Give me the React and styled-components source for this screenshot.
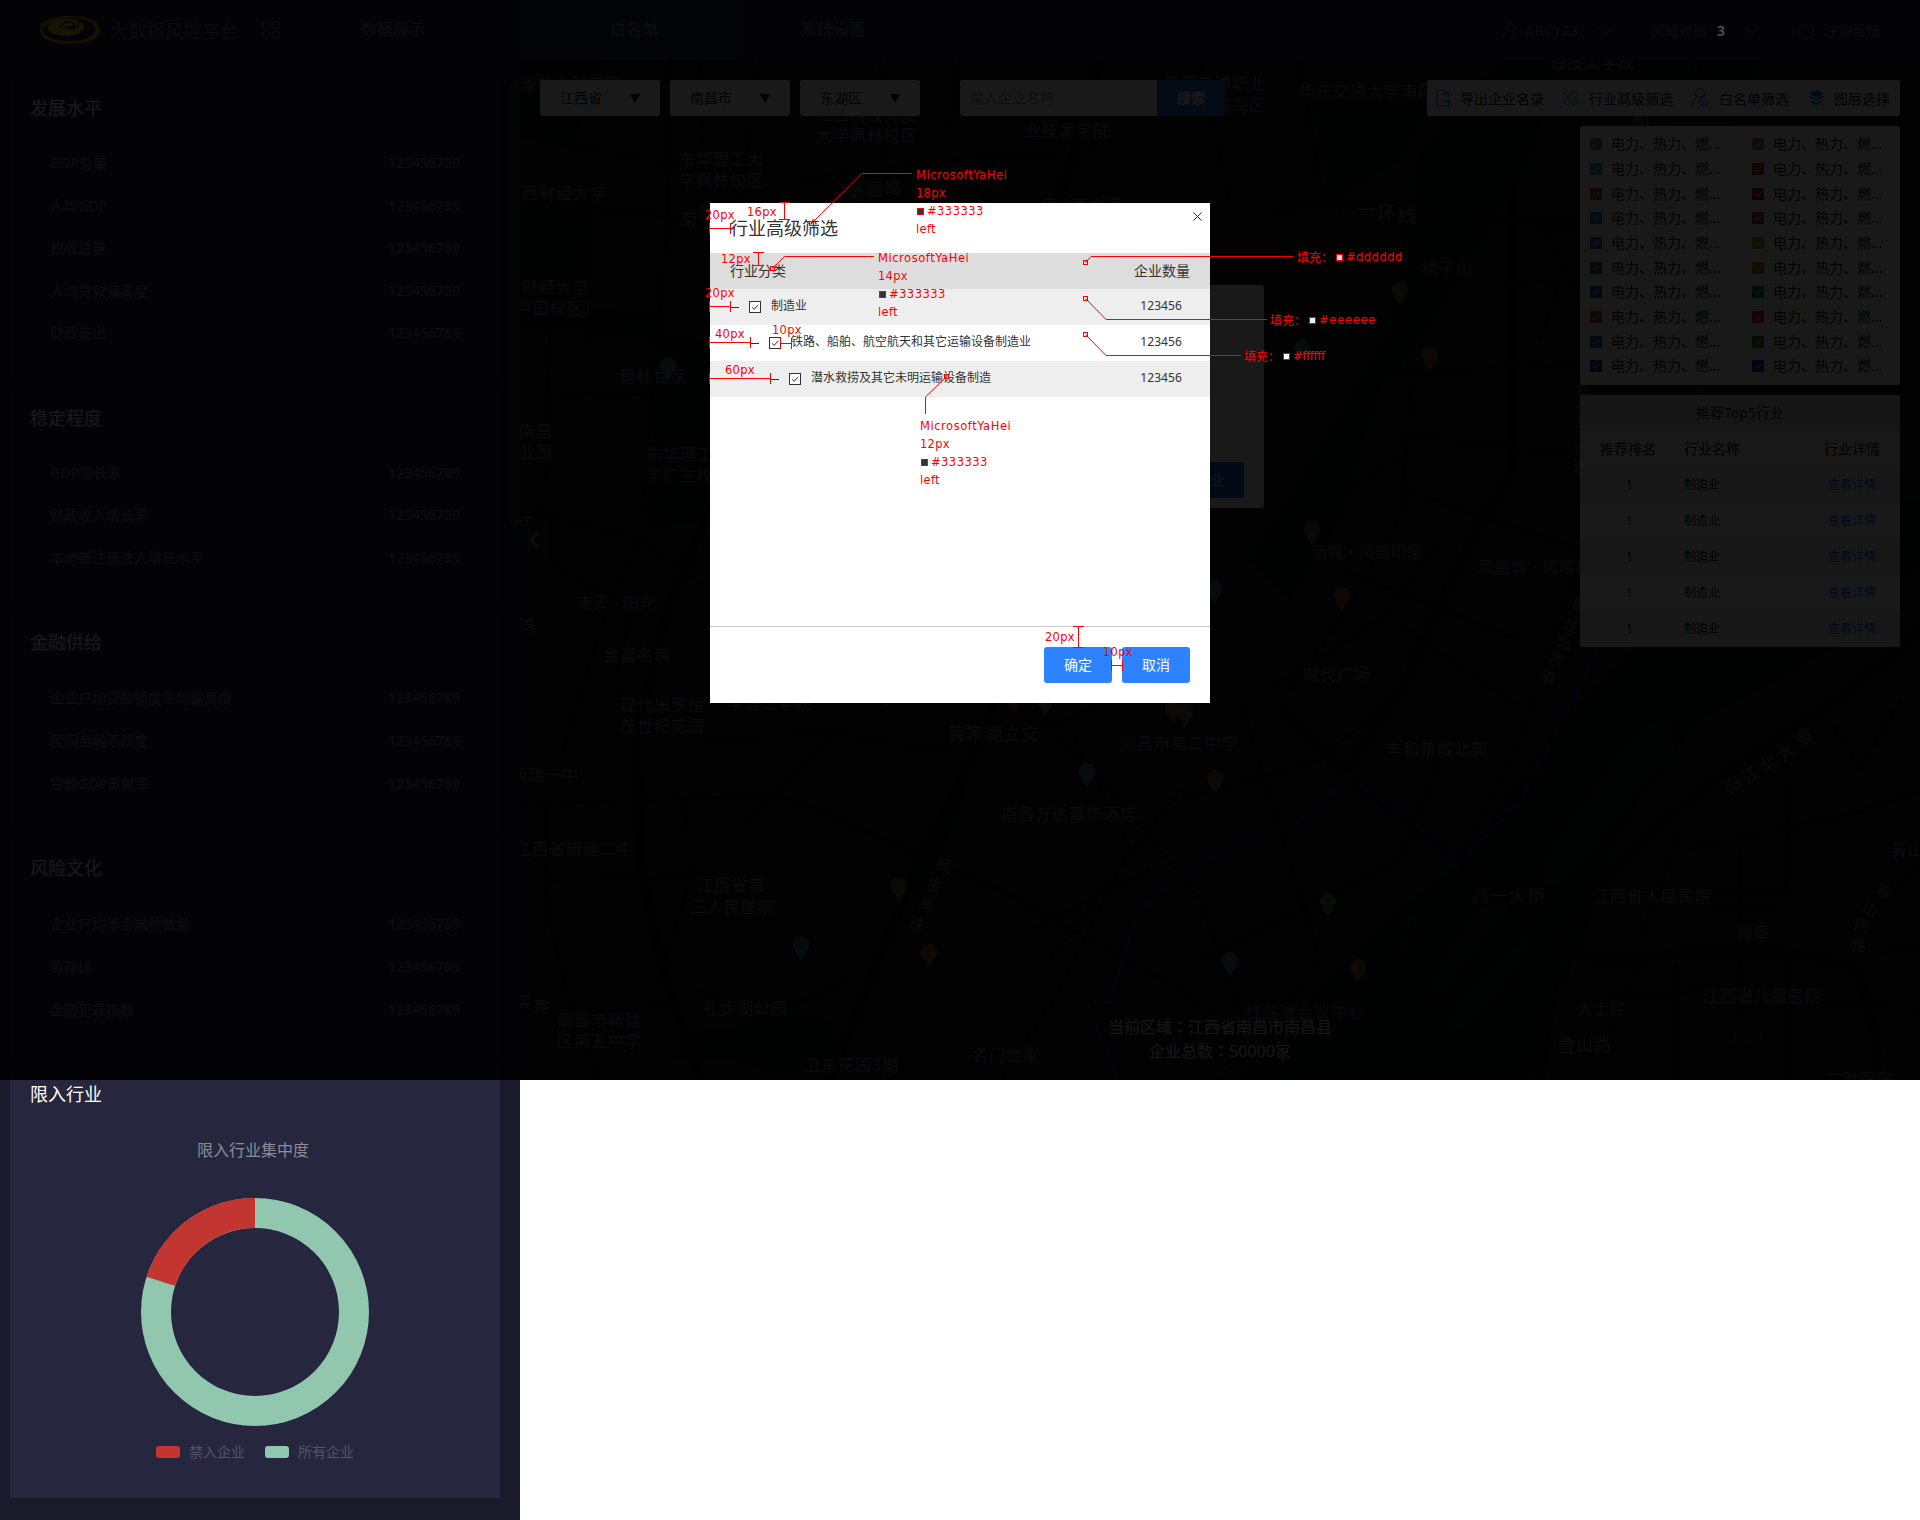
import React from "react";
import styled, { createGlobalStyle } from "styled-components";

const GlobalStyle = createGlobalStyle`
  * { box-sizing: border-box; }
  body {
    margin: 0;
    background: #fff;
    font-family: "Noto Sans", "Noto Sans CJK SC", sans-serif;
    font-size: 14px;
    color: #333;
  }
  svg { flex: none; }
`;

/* ---------- page frame ---------- */

const Page = styled.div`
  position: relative;
  width: 1920px;
  height: 1520px;
  overflow: hidden;
`;

const Body = styled.div`
  display: flex;
  align-items: flex-start;
`;

/* ---------- header ---------- */

const Header = styled.header`
  display: flex;
  align-items: center;
  height: 60px;
  background: #26273f;
  color: #6c6d7c;
`;

const Brand = styled.div`
  display: flex;
  align-items: center;
  flex: none;
  width: 268px;
  padding-left: 40px;
  white-space: nowrap;
`;

const BrandName = styled.h1`
  margin: 1px 23px 0 10px;
  font-size: 18px;
  font-weight: 400;
  line-height: 26px;
  letter-spacing: 0.4px;
  flex: none;
`;

const Tab = styled.a`
  width: ${(p) => p.$width}px;
  height: 60px;
  padding-left: ${(p) => p.$pad}px;
  font-size: 16px;
  font-weight: 500;
  line-height: 59px;
  background: ${(p) => (p.$active ? "#252d52" : "transparent")};
`;

const Account = styled.div`
  display: flex;
  align-items: center;
  margin-left: auto;
  padding: 1px 40px 0 0;
  line-height: 20px;
  white-space: nowrap;
`;

const AccountItem = styled.div`
  display: flex;
  align-items: center;
  gap: ${(p) => p.$gap}px;
  margin-left: ${(p) => p.$left}px;
`;

const UserName = styled.span`
  letter-spacing: 0.3px;
`;

const Count = styled.b`
  position: relative;
  z-index: 3;
  width: 8px;
  margin: 0 12px 0 3px;
  font-weight: 600;
  color: #505050;
`;

/* ---------- sidebar ---------- */

const Sidebar = styled.aside`
  display: flex;
  width: 520px;
  height: 1460px;
  padding: 20px 0 0 10px;
  background: #1a1a2b;
`;

const Cards = styled.div`
  display: flex;
  flex-direction: column;
  gap: 10px;
  width: 490px;
`;

const Card = styled.section`
  height: ${(p) => p.$height}px;
  padding: 14px 40px 0 20px;
  background: #26273e;
`;

const CardTitle = styled.h2`
  margin: 0;
  font-size: 18px;
  font-weight: 400;
  line-height: 28px;
  color: #fff;
`;

const Metrics = styled.div`
  margin: 20px 0 0 20px;
`;

const Metric = styled.div`
  display: flex;
  justify-content: space-between;
  height: ${(p) => p.$pitch}px;
  line-height: ${(p) => p.$pitch}px;
  color: #82838f;
`;

const ScrollThumb = styled.div`
  width: 10px;
  height: 448px;
  margin-left: 10px;
  border-radius: 5px;
  background: #3a3a3c;
`;

const ChartTitle = styled.h3`
  margin: 29px -20px 35px 0;
  font-size: 16px;
  font-weight: 400;
  line-height: 26px;
  text-align: center;
  padding-right: 4px;
  color: #8c8c98;
`;

const Donut = styled.svg`
  display: block;
  width: 228px;
  height: 228px;
  margin-left: 111px;
`;

const Legend = styled.div`
  display: flex;
  align-items: center;
  gap: 9px;
  margin: 16px 0 0 126px;
  line-height: 20px;
  color: #54556a;
`;

const Swatch = styled.i`
  width: 24px;
  height: 12px;
  border-radius: 3px;
  background: ${(p) => p.$color};
  &:not(:first-child) { margin-left: 11px; }
`;

/* ---------- map ---------- */

const MapArea = styled.main`
  position: relative;
  width: 1400px;
  height: 1020px;
  background: #151716;
  overflow: hidden;
`;

const MapCanvas = styled.svg`
  position: absolute;
  inset: 0;
  width: 1400px;
  height: 1020px;
`;

const MapControls = styled.div`
  position: relative;
  display: flex;
  justify-content: space-between;
  align-items: flex-start;
  padding: 20px 20px 0;
`;

const Filters = styled.div`
  display: flex;
  gap: 10px;
`;

const Select = styled.div`
  display: flex;
  align-items: center;
  justify-content: space-between;
  width: 120px;
  height: 36px;
  padding: 0 20px;
  border-radius: 3px;
  background: #fff;
  color: #111;
  line-height: 34px;
`;

const Search = styled.div`
  display: flex;
  width: 265px;
  height: 36px;
  margin-left: 30px;
  border-radius: 3px;
  overflow: hidden;
  background: #fff;
  line-height: 35px;
`;

const SearchField = styled.span`
  flex: 1;
  padding-left: 10px;
  color: #999;
`;

const SearchButton = styled.b`
  width: 68px;
  text-align: center;
  font-weight: 700;
  background: #2070e0;
  color: #fff;
`;

const RightColumn = styled.div`
  display: flex;
  flex-direction: column;
  align-items: flex-end;
  gap: 10px;
`;

const Toolbar = styled.div`
  display: flex;
  align-items: center;
  width: 473px;
  height: 36px;
  padding: 0 0 1px 9px;
  border-radius: 3px;
  background: #fff;
  white-space: nowrap;
  color: #111;
`;

const Tool = styled.span`
  display: flex;
  align-items: center;
  flex: none;
  gap: ${(p) => p.$gap}px;
  width: ${(p) => p.$width}px;
`;

const IndustryFilter = styled.div`
  display: grid;
  grid-template-columns: 162px 1fr;
  grid-auto-rows: 24.67px;
  width: 320px;
  height: 259px;
  padding: 6px 10px;
  border-radius: 3px;
  background: #fff;
  color: #151515;
`;

const Industry = styled.span`
  display: flex;
  align-items: center;
  gap: 9px;
  line-height: 22px;
  white-space: nowrap;
`;

const ColorCheck = styled.svg`
  width: 12px;
  height: 12px;
  background: ${(p) => p.$color};
`;

const Ranking = styled.div`
  width: 320px;
  border-radius: 3px;
  overflow: hidden;
  background: #fff;
  line-height: 35px;
  color: #222;
`;

const RankingTitle = styled.div`
  height: 36px;
  text-align: center;
  background: #dcdcdc;
`;

const RankingRow = styled.div`
  display: grid;
  grid-template-columns: 104px 1fr 96px;
  height: 36px;
  font-size: ${(p) => (p.$head ? 14 : 12)}px;
  background: ${(p) => p.$bg};
  color: #111;
  & > :nth-child(1) { padding-left: ${(p) => (p.$head ? 20 : 46)}px; }
  & > :nth-child(3) { text-align: center; }
`;

const DetailLink = styled.a`
  color: #1068e8;
`;

const InfoPopup = styled.div`
  position: absolute;
  left: 424px;
  top: 225px;
  display: flex;
  align-items: flex-end;
  justify-content: flex-end;
  width: 320px;
  height: 223px;
  padding: 10px 20px;
  border-radius: 3px;
  background: #fff;
`;

const PopupButton = styled.span`
  padding: 0 20px;
  height: 36px;
  border-radius: 3px;
  line-height: 36px;
  background: #1e62cc;
  color: #c0c8d8;
`;

const Collapse = styled.div`
  position: absolute;
  left: 0;
  top: 462px;
  display: flex;
  align-items: center;
  justify-content: center;
  width: 28px;
  height: 36px;
  background: #1d231f;
`;

const RegionInfo = styled.div`
  position: absolute;
  left: 550px;
  top: 955px;
  width: 300px;
  font-size: 16px;
  line-height: 24px;
  text-align: center;
  color: #e0e0e0;
`;

const Colon = styled.span`
  font-family: "Noto Sans CJK TC", sans-serif;
  line-height: 1;
`;

/* ---------- modal ---------- */

const Mask = styled.div`
  position: absolute;
  z-index: 2;
  left: 0;
  top: 0;
  display: flex;
  justify-content: center;
  align-items: flex-start;
  width: 1920px;
  height: 1080px;
  padding-top: 203px;
  background: rgba(0, 0, 0, 0.9);
`;

const Modal = styled.div`
  display: flex;
  flex-direction: column;
  width: 500px;
  height: 500px;
  background: #fff;
`;

const ModalHead = styled.div`
  display: flex;
  justify-content: space-between;
  height: 50px;
  padding: 0 8px 0 20px;
`;

const ModalTitle = styled.h2`
  margin: 11px 0 0;
  font-size: 18px;
  font-weight: 400;
  line-height: 28px;
`;

const CloseIcon = styled.svg`
  width: 9px;
  height: 9px;
  margin-top: 9px;
`;

const TableHead = styled.div`
  display: flex;
  justify-content: space-between;
  height: 36px;
  padding: 0 20px;
  line-height: 35px;
  background: #ddd;
`;

const TreeRow = styled.div`
  display: flex;
  align-items: center;
  height: 36px;
  padding: 0 28px 0 ${(p) => p.$level * 20}px;
  font-size: 12px;
  background: ${(p) => (p.$level % 2 ? "#eee" : "#fff")};
`;

const Minus = styled.i`
  width: 9px;
  height: 1px;
  margin-right: 10px;
  background: #333;
`;

const CheckBox = styled.svg`
  width: 12px;
  height: 12px;
  margin-right: 10px;
`;

const RowName = styled.span`
  height: 36px;
  line-height: 34px;
`;

const Amount = styled.span`
  height: 36px;
  margin-left: auto;
  line-height: 34px;
  letter-spacing: 0.1px;
`;

const ModalFoot = styled.div`
  display: flex;
  justify-content: flex-end;
  gap: 10px;
  height: 77px;
  margin-top: auto;
  padding: 20px 20px 0;
  border-top: 1px solid #ccc;
`;

const Button = styled.button`
  width: 68px;
  height: 36px;
  padding: 0;
  border: 0;
  border-radius: 3px;
  font: 14px/36px "Noto Sans", "Noto Sans CJK SC", sans-serif;
  background: #2d82ff;
  color: #fff;
`;

/* ---------- design annotations laid over the page ---------- */

const Notes = styled.div`
  position: absolute;
  z-index: 4;
  inset: 0;
  font: 12.8px/18px "DejaVu Sans Condensed", "DejaVu Sans", "Noto Sans CJK SC", sans-serif;
  font-stretch: condensed;
  letter-spacing: 0.3px;
  color: #f00;
  white-space: pre;
`;

const NoteLines = styled.svg`
  position: absolute;
  inset: 0;
  width: 1920px;
  height: 720px;
`;

const Note = styled.div`
  position: absolute;
  left: ${(p) => p.$x}px;
  top: ${(p) => p.$y}px;
`;

const NoteRow = styled.div`
  display: flex;
  align-items: center;
  height: 18px;
  letter-spacing: ${(p) => p.$spacing ?? 0.3}px;
`;

const NoteSwatch = styled.i`
  width: 7px;
  height: 7px;
  margin: 0 3px 0 1px;
  border: 1px solid #f00;
  background: ${(p) => p.$color};
`;

const FillLabel = styled.span`
  width: 38px;
  font: 12px/18px "Noto Sans CJK SC", sans-serif;
  letter-spacing: 0;
`;

/* ---------- data ---------- */

const V = "123456789";

const cards = [
  { title: "发展水平", height: 300, pitch: 42.5, rows: ["GDP总量", "人均GDP", "税收总量", "人均贷款偏离度", "财政支出"] },
  { title: "稳定程度", height: 214, pitch: 42.3, rows: ["GDP增长率", "财政收入增长率", "本地新注册法人增长水平"] },
  { title: "金融供给", height: 216, pitch: 43, rows: ["企业户均贷款额度平均偏离度", "民间金融活跃度", "贷款GDP贡献率"] },
  { title: "风险文化", height: 216, pitch: 43, rows: ["企业户均涉金融债数量", "货存比", "金融犯罪指数"] },
];

const industryColors = [
  "#6f8a42", "#a08a2c", "#2496a4", "#aa2c3a", "#b0602a", "#b0141c", "#2070bc", "#a03c56", "#4a5cc0", "#949420",
  "#387264", "#b07012", "#18509c", "#20846c", "#b05a26", "#c02c22", "#2068a8", "#4c7440", "#42308a", "#242e94",
];

const treeRows = [
  "制造业",
  "铁路、船舶、航空航天和其它运输设备制造业",
  "潜水救捞及其它未明运输设备制造",
];

// [text, left, centre y, size, rotation]
const labels = [
  ["省林业科学院", 520, 83], ["西财经大学", 522, 193], ["财经大学", 522, 287], ["芦园校区）", 516, 308],
  ["南昌", 519, 431], ["业园", 519, 452], ["湾", 519, 523], ["湾", 519, 625], ["翰林世家", 619, 376],
  ["东华理工大", 646, 454], ["学广兰校区", 646, 475], ["南天 · 阳光", 577, 602, 15], ["金嘉名筑", 603, 655],
  ["现代米罗恒", 620, 705], ["茂世纪花园", 620, 726], ["新建一中", 511, 775], ["江西省新建二中", 515, 849],
  ["江西省第", 697, 885], ["三人民医院", 690, 907], ["实", 516, 1001, 15], ["路", 534, 1006, 15],
  ["南昌市新建", 557, 1020], ["区第五中学", 557, 1041], ["礼步湖公园", 703, 1008], ["卫东花园3期", 804, 1065],
  ["名门世家", 972, 1055], ["枫", 936, 865, 15, 20], ["生", 927, 885, 15, 20], ["高", 919, 904, 15, 20],
  ["速", 909, 924, 15, 20], ["黄家湖立交", 948, 733, 17.4], ["南昌市第二中学", 1120, 743],
  ["南昌万达嘉华酒店", 1001, 814], ["学理工学院", 728, 703], ["东华理工大", 679, 159], ["学枫林校区", 679, 180],
  ["江西科技师范", 816, 114], ["大学枫林校区", 816, 135], ["江西交通职业", 1164, 83], ["院南区", 1215, 105],
  ["业技术学院", 1025, 130], ["菊", 847, 193], ["圃", 866, 189], ["路", 885, 187], ["菊", 681, 219], ["圃", 699, 212],
  ["庐山南大道", 1041, 204, 15], ["华东交通大学南区", 1299, 91], ["油技工学校", 1550, 62], ["和", 1632, 118, 18],
  ["一", 1356, 210, 19], ["环", 1377, 213, 19], ["线", 1398, 215, 19], ["狮子山", 1422, 268], ["红", 1577, 389, 14],
  ["谷", 1576, 406, 14], ["滩", 1575, 423, 14], ["大", 1574, 448, 14], ["道", 1573, 466, 14],
  ["商城 · 凤凰印象", 1312, 551, 15], ["凤凰城 · 凤鸣苑", 1478, 567, 15.4], ["赣", 1572, 606, 15, 15],
  ["江", 1564, 626, 15, 20], ["北", 1556, 643, 15, 20], ["大", 1549, 658, 15, 25], ["道", 1541, 677, 15, 25],
  ["时代广场", 1303, 674], ["丰和新城北苑", 1386, 749], ["沿", 1724, 784, 17, -38], ["江", 1742, 775, 17, -38],
  ["北", 1760, 763, 17, -38], ["大", 1777, 751, 17, -38], ["道", 1795, 737, 17, -38], ["青山", 1891, 850],
  ["八一大桥", 1472, 895, 17.4], ["江西省人民医院", 1593, 896], ["豫章", 1738, 932, 15], ["章", 1877, 892, 15, 40],
  ["山", 1863, 909, 15, 30], ["南", 1854, 925, 15, 15], ["路", 1851, 945, 15], ["江西省儿童医院", 1703, 996],
  ["大士院", 1577, 1008, 15], ["叠山路", 1558, 1045, 17], ["二附医院", 1825, 1079], ["红谷滩会议中心", 1246, 1012],
];

const faintLabels = [
  ["北湖", 1730, 1037, 16, 0], ["防", 1404, 923, 14, 15], ["江", 1396, 945, 14, 15], ["赣", 1563, 965, 14, 25], ["江", 1550, 990, 14, 25],
];

const TEAL = "#437a85";
const GREEN = "#566a3a";
const ORANGE = "#805326";
const pins = [
  [668, 357, TEAL], [1400, 281, GREEN], [1430, 347, ORANGE], [1302, 340, TEAL], [1312, 521, GREEN], [1342, 587, ORANGE],
  [1214, 580, TEAL], [1014, 689, ORANGE], [1045, 692, TEAL], [886, 682, TEAL], [1173, 699, ORANGE], [1185, 704, GREEN],
  [1087, 763, TEAL], [1215, 770, ORANGE], [899, 878, GREEN], [801, 937, TEAL], [929, 944, ORANGE], [1328, 893, GREEN],
  [1230, 952, TEAL], [1358, 959, ORANGE],
];

const waters = [
  "M1700 500L1640 640L1560 720L1462 862L1400 910L1330 980L1260 1040L1240 1080H1530L1560 970L1590 890L1640 800L1700 720L1850 640L1920 560V500Z",
  "M520 205L590 212L585 305L520 300Z",
  "M520 308L655 312L655 338L520 322Z",
  "M662 342L710 346V520L645 528Z",
  "M675 1060Q690 1020 730 1030Q770 1010 830 1020L840 1050Q790 1090 740 1060Z",
  "M1420 150L1500 60H1560L1530 160L1470 260L1420 340L1380 390L1340 520L1290 600L1250 560L1330 430L1390 330Z",
  "M1310 80L1430 100L1400 160L1330 200Z",
  "M1640 60H1760L1720 140L1650 120Z",
  "M960 790L975 730L965 800L920 900L900 880Z",
  "M520 60H600L575 150L520 135Z",
];
const islands = [
  "M1540 880Q1545 850 1580 810Q1620 740 1655 720Q1680 710 1675 750Q1640 790 1600 840Q1560 900 1540 880Z",
  "M1433 990Q1440 950 1480 910Q1530 880 1500 920Q1460 970 1440 1000Z",
  "M1447 1030Q1460 990 1500 960L1532 930Q1520 970 1490 1000Q1460 1040 1447 1030Z",
];
const wideRoads = [
  "M830 1080L890 930L960 780L1000 690L1060 500",
  "M637 720L640 860L660 960L700 1080",
  "M1280 705L1345 775L1460 860L1560 945Q1590 965 1640 960Q1740 940 1850 965Q1870 985 1880 1080",
  "M640 720L670 600L720 490",
  "M1345 775L1400 690L1470 540L1512 470V60",
  "M1540 1080L1550 1010L1600 880L1700 790L1850 690L1920 630",
  "M1100 60L1060 200M1270 214Q1330 190 1440 215L1580 225",
];
const roads = [
  "M520 135L710 172", "M520 200L700 220", "M670 60L668 220L655 360L640 540L610 600L560 760",
  "M520 392L655 395", "M520 515L560 518L640 540L710 590", "M520 320L710 345", "M590 210L585 350",
  "M550 325L545 480L542 515", "M540 540Q560 580 600 590T620 660T690 720",
  "M520 805L640 800L760 796Q810 800 850 825L1000 890L1180 990L1300 1080",
  "M520 880L695 878", "M545 800L545 900L570 1005L600 1080", "M685 800L690 880L660 980",
  "M835 733L930 750L1070 720L1200 640", "M835 733L780 790L740 830M835 733L700 740",
  "M1056 735L1120 800L1200 900L1240 1010", "M1070 730L1130 850L1060 990L1000 1080",
  "M1240 700L1320 960L1290 1000L1220 1080", "M1180 800L1320 760L1390 700",
  "M1200 960L1400 860L1440 760", "M1150 870L1030 930M1180 790L1050 960",
  "M1400 220L1410 400L1400 520L1340 620L1290 690", "M1405 490L1580 550", "M1400 435L1580 455",
  "M1400 625L1530 715", "M1340 570L1520 640", "M1270 690L1380 620L1440 540", "M1580 560L1520 740L1460 860",
  "M1300 60L1325 210M1345 60L1340 210", "M1540 220L1580 300V380M1380 372L1590 365", "M1410 450L1330 500M1470 280L1560 282L1540 340",
  "M1600 1000L1700 990L1920 1010", "M1640 960L1600 1060M1675 965V1080M1740 955L1745 1060M1790 960V1080",
  "M1680 850L1850 815L1920 790M1690 890H1785M1710 910H1780M1740 850V940M1790 780L1785 900",
  "M1830 720L1860 770L1900 700M1680 830L1640 940M1865 955L1920 945M1860 930L1920 860",
  "M800 180L960 160L1100 150M700 60L705 203M520 1010L610 1012L690 1000M700 990L760 1020L850 980",
  "M760 60L740 203M880 60L890 203M950 130L960 60M1200 60L1230 203",
];
const metro = [
  "M1694 62L1708 122", "M1700 380L1690 440L1600 645L1568 710L1520 800L1462 862L1430 835L1347 775L1312 815L1200 864Q1150 890 1132 930L1109 1002L1088 1005L1100 1035L1118 1080",
];

/* ---------- icons ---------- */

const Check = ({ color }) => (
  <path d="M3 6.2L5.2 8.4L9.2 3.8" fill="none" stroke={color} strokeWidth="1" />
);

const Chevron = () => (
  <svg width="15" height="8" viewBox="0 0 15 8" fill="none" stroke="currentColor"><path d="M.5 .5L7.5 7.3L14.5 .5" /></svg>
);

const Logo = () => (
  <svg width="60" height="30" viewBox="0 0 60 30">
    <path fill="#d89a00" fillRule="evenodd" d="M0 15C0 6 12 1 30 1S60 6 60 15S47 29 30 29S0 24 0 15ZM3 15C3 21 14 26 30 26C45 26 55 21 55 14C55 7 45 3 31 3C20 3 15 5 10 8C6 10 3 12 3 15Z" />
    <path fill="#f0cc00" d="M8 12C10 5 22 3 30 4C40 5 46 9 43 14C40 20 28 22 19 20C11 19 7 16 8 12Z" />
    <path d="M21 12C21 7 30 6 33 8C36 11 31 13 27 12C31 16 40 11 38 7" fill="none" stroke="#26273f" strokeWidth="1.8" />
  </svg>
);

const GridIcon = ({ size = 18, color = "currentColor", round }) => (
  <svg width={size} height={size} viewBox="0 0 18 18" fill="none" stroke={color} strokeWidth="1.2">
    <rect x="1" y="1" width="6.4" height="6.4" rx="1" />
    {round ? <circle cx="13.8" cy="4.2" r="3.5" /> : <rect x="10.6" y="1" width="6.4" height="6.4" rx="1" />}
    <rect x="1" y="10.6" width="6.4" height="6.4" rx="1" />
    <rect x="10.6" y="10.6" width="6.4" height="6.4" rx="1" />
  </svg>
);

const UserIcon = () => (
  <svg width="17" height="17" viewBox="0 0 17 17" fill="none" stroke="currentColor">
    <circle cx="9" cy="5" r="4.3" /><path d="M6.5 8.8C3 10.5 1.3 13 .8 16.5M11 9C12.5 10 13 10.8 13.3 12M11.5 13H16M11.5 16H17" />
  </svg>
);

const PowerIcon = () => (
  <svg width="17" height="18" viewBox="0 0 17 18" fill="none" stroke="currentColor">
    <path d="M5.5 2.2A7.6 7.6 0 1 0 11.5 2.2M8.5 0V6" />
  </svg>
);

const BLUE = "#2070e0";

const ExportIcon = () => (
  <svg width="15" height="18" viewBox="0 0 15 18" fill="none" stroke={BLUE} strokeWidth="1.2">
    <path d="M12.3 9V5L8.5 1H1V17H12.3V14.5M8.3 1V5.3H12.3M6.5 11.8H14M11.6 9.4L14 11.8L11.6 14.2" />
  </svg>
);

const UserCheckIcon = () => (
  <svg width="17" height="19" viewBox="0 0 17 19" fill="none" stroke={BLUE} strokeWidth="1.2">
    <circle cx="8" cy="5" r="4.3" /><path d="M5.3 8.7C2.4 10.4 1 13 .7 17M11 8.5L11.7 9" />
    <circle cx="11.8" cy="13.6" r="4.3" /><path d="M9.8 13.6L11.4 15.2L14 12.3" />
  </svg>
);

const LayersIcon = () => (
  <svg width="15" height="16" viewBox="0 0 15 16" fill={BLUE}>
    <path d="M7.5 0L15 3.7L7.5 7.4L0 3.7ZM0 7L2 6L7.5 8.8L13 6L15 7L7.5 11.2ZM0 11L2 10L7.5 12.8L13 10L15 11L7.5 15.5Z" />
  </svg>
);

/* ---------- sections ---------- */

function TopBar() {
  return (
    <Header>
      <Brand><Logo /><BrandName>大数据风控平台</BrandName><GridIcon /></Brand>
      <Tab $width={252} $pad={93}>数据展示</Tab>
      <Tab $width={220} $pad={90} $active>白名单</Tab>
      <Tab $width={220} $pad={61}>系统设置</Tab>
      <Account>
        <AccountItem $gap={7}><UserIcon /><UserName>ABC123</UserName></AccountItem>
        <AccountItem $left={20}><Chevron /></AccountItem>
        <AccountItem $gap={7} $left={38}>区域对比<Count>3</Count><Chevron /></AccountItem>
        <AccountItem $gap={9} $left={39}><PowerIcon />注销系统</AccountItem>
      </Account>
    </Header>
  );
}

function SideBar() {
  return (
    <Sidebar>
      <Cards>
        {cards.map((c) => (
          <Card key={c.title} $height={c.height}>
            <CardTitle>{c.title}</CardTitle>
            <Metrics>
              {c.rows.map((r) => <Metric key={r} $pitch={c.pitch}><span>{r}</span><span>{V}</span></Metric>)}
            </Metrics>
          </Card>
        ))}
        <Card $height={432}>
          <CardTitle>限入行业</CardTitle>
          <ChartTitle>限入行业集中度</ChartTitle>
          <Donut viewBox="-114 -114 228 228" fill="none" strokeWidth="30">
            <circle r="99" stroke="#91c7ae" />
            <path d="M0 -99A99 99 0 0 0 -94.15 -30.6" stroke="#c23531" />
          </Donut>
          <Legend>
            <Swatch $color="#c23531" />禁入企业
            <Swatch $color="#91c7ae" />所有企业
          </Legend>
        </Card>
      </Cards>
      <ScrollThumb />
    </Sidebar>
  );
}

const MapLabel = ({ item: [t, x, y, size = 16, rot = 0], fill }) => (
  <text x={x} y={y + size * 0.38} fontSize={size} letterSpacing="1" fill={fill}
    transform={rot ? `rotate(${rot} ${x + size / 2} ${y})` : undefined}>{t}</text>
);

function CityMap() {
  return (
    <MapCanvas viewBox="520 60 1400 1020">
      {waters.map((d) => <path key={d} d={d} fill="#080b13" />)}
      {islands.map((d) => <path key={d} d={d} fill="#10141b" />)}
      <g fill="none" stroke="#06080b" strokeLinejoin="round">
        {roads.map((d) => <path key={d} d={d} strokeWidth="2.5" />)}
        {wideRoads.map((d) => <path key={d} d={d} strokeWidth="8" stroke="#030405" />)}
      </g>
      {metro.map((d) => <path key={d} d={d} fill="none" stroke="#261e80" strokeWidth="2.5" strokeDasharray="14 8" />)}
      {labels.map((l, i) => <MapLabel key={i} item={l} fill="#6b727e" />)}
      {faintLabels.map((l, i) => <MapLabel key={i} item={l} fill="#2a3040" />)}
      {pins.map(([x, y, color]) => (
        <path key={`${x}-${y}`} fill={color}
          d={`M${x} ${y + 24}C${x - 3} ${y + 18} ${x - 8} ${y + 13} ${x - 8} ${y + 8}A8 8 0 0 1 ${x + 8} ${y + 8}C${x + 8} ${y + 13} ${x + 3} ${y + 18} ${x} ${y + 24}Z`} />
      ))}
    </MapCanvas>
  );
}

function MapPanel() {
  return (
    <MapArea>
      <CityMap />
      <MapControls>
        <Filters>
          {["江西省", "南昌市", "东湖区"].map((n) => (
            <Select key={n}>{n}<svg width="10" height="9"><path d="M0 0H10L5 9Z" fill="#000" /></svg></Select>
          ))}
          <Search><SearchField>输入企业名称</SearchField><SearchButton>搜索</SearchButton></Search>
        </Filters>
        <RightColumn>
          <Toolbar>
            <Tool $gap={9} $width={128}><ExportIcon />导出企业名录</Tool>
            <Tool $gap={11} $width={128}><GridIcon size={14} color={BLUE} round />行业高级筛选</Tool>
            <Tool $gap={10} $width={117}><UserCheckIcon />白名单筛选</Tool>
            <Tool $gap={10} $width={90}><LayersIcon />图层选择</Tool>
          </Toolbar>
          <IndustryFilter>
            {industryColors.map((c) => (
              <Industry key={c}><ColorCheck $color={c} viewBox="0 0 12 12"><Check color="#fff" /></ColorCheck>电力、热力、燃...</Industry>
            ))}
          </IndustryFilter>
          <Ranking>
            <RankingTitle>推荐Top5行业</RankingTitle>
            <RankingRow $head $bg="#f4f4f4"><span>推荐排名</span><span>行业名称</span><span>行业详情</span></RankingRow>
            {[0, 1, 2, 3, 4].map((i) => (
              <RankingRow key={i} $bg={i % 2 ? "#fff" : "#eaeaea"}>
                <span>1</span><span>制造业</span><DetailLink>查看详情</DetailLink>
              </RankingRow>
            ))}
          </Ranking>
        </RightColumn>
      </MapControls>
      <InfoPopup><PopupButton>查看企业</PopupButton></InfoPopup>
      <Collapse><svg width="9" height="16" fill="none" stroke="#fff"><path d="M8.5 .5L.8 8L8.5 15.5" /></svg></Collapse>
      <RegionInfo>当前区域<Colon>：</Colon>江西省南昌市南昌县<br />企业总数<Colon>：</Colon>50000家</RegionInfo>
    </MapArea>
  );
}

function FilterModal() {
  return (
    <Mask>
      <Modal>
        <ModalHead>
          <ModalTitle>行业高级筛选</ModalTitle>
          <CloseIcon viewBox="0 0 9 9"><path d="M.5 .5L8.5 8.5M8.5 .5L.5 8.5" stroke="#333" /></CloseIcon>
        </ModalHead>
        <TableHead><span>行业分类</span><span>企业数量</span></TableHead>
        {treeRows.map((name, i) => (
          <TreeRow key={name} $level={i + 1}>
            <Minus />
            <CheckBox viewBox="0 0 12 12"><rect x=".5" y=".5" width="11" height="11" fill="#fff" stroke="#333" /><Check color="#333" /></CheckBox>
            <RowName>{name}</RowName>
            <Amount>123456</Amount>
          </TreeRow>
        ))}
        <ModalFoot><Button>确定</Button><Button>取消</Button></ModalFoot>
      </Modal>
    </Mask>
  );
}

const h = (x1, x2, y) => `M${x1} ${y}H${x2}M${x1} ${y - 5.5}V${y + 5.5}M${x2} ${y - 5.5}V${y + 5.5}`;
const v = (x, y1, y2) => `M${x} ${y1}V${y2}M${x - 5.5} ${y1}H${x + 5.5}M${x - 5.5} ${y2}H${x + 5.5}`;

const noteLines = [
  "M811.5 223.5L862 173.5H912", "M772.5 268.5L784.5 256.5H874", "M946.5 376.5L925.5 397V414",
  "M1085.5 262.5L1091 256.5H1293", "M1085.5 298.5L1106 319.5H1267", "M1085.5 334.5L1106 355.5H1241",
  h(709.5, 730.5, 228.5), h(709.5, 730.5, 306.5), h(709.5, 750.5, 342.5), h(709.5, 770.5, 378.5),
  h(780.5, 791.5, 343.5), h(1111.5, 1122.5, 665.5), v(784.5, 202.5, 219.5), v(758.5, 252.5, 265.5), v(1078.5, 626.5, 647.5),
];
const markers = [[811.5, 223.5], [772.5, 268.5], [946.5, 376.5], [1085.5, 262.5], [1085.5, 298.5], [1085.5, 334.5]];
const fontNotes = [[916, 166, "18px"], [878, 249, "14px"], [920, 417, "12px"]];
const sizeNotes = [
  [705, 206, "20px"], [747, 203, "16px"], [721, 250, "12px"], [705, 284, "20px"], [715, 325, "40px"],
  [772, 321, "10px"], [725, 361, "60px"], [1045, 628, "20px"], [1103, 643, "10px"],
];
const fillNotes = [[1297, 248, "#dddddd", 0.45], [1270, 311, "#eeeeee", 0.7], [1244, 347, "#ffffff", -0.3]];

function Annotations() {
  return (
    <Notes>
      <NoteLines fill="none" stroke="#f00">
        {noteLines.map((d) => <path key={d} d={d} />)}
        {markers.map(([x, y]) => <rect key={`${x}-${y}`} x={x - 2} y={y - 2} width="4" height="4" />)}
      </NoteLines>
      {fontNotes.map(([x, y, size]) => (
        <Note key={size} $x={x} $y={y}>
          <NoteRow $spacing={0.55}>MicrosoftYaHei</NoteRow>
          <NoteRow>{size}</NoteRow>
          <NoteRow $spacing={0.45}><NoteSwatch $color="#333" />#333333</NoteRow>
          <NoteRow>left</NoteRow>
        </Note>
      ))}
      {sizeNotes.map(([x, y, t]) => <Note key={`${x}-${y}`} $x={x} $y={y}>{t}</Note>)}
      {fillNotes.map(([x, y, color, spacing]) => (
        <Note key={color} $x={x} $y={y}>
          <NoteRow $spacing={spacing}><FillLabel>填充：</FillLabel><NoteSwatch $color={color} />{color}</NoteRow>
        </Note>
      ))}
    </Notes>
  );
}

export default function App() {
  return (
    <Page>
      <GlobalStyle />
      <TopBar />
      <Body>
        <SideBar />
        <MapPanel />
      </Body>
      <FilterModal />
      <Annotations />
    </Page>
  );
}
